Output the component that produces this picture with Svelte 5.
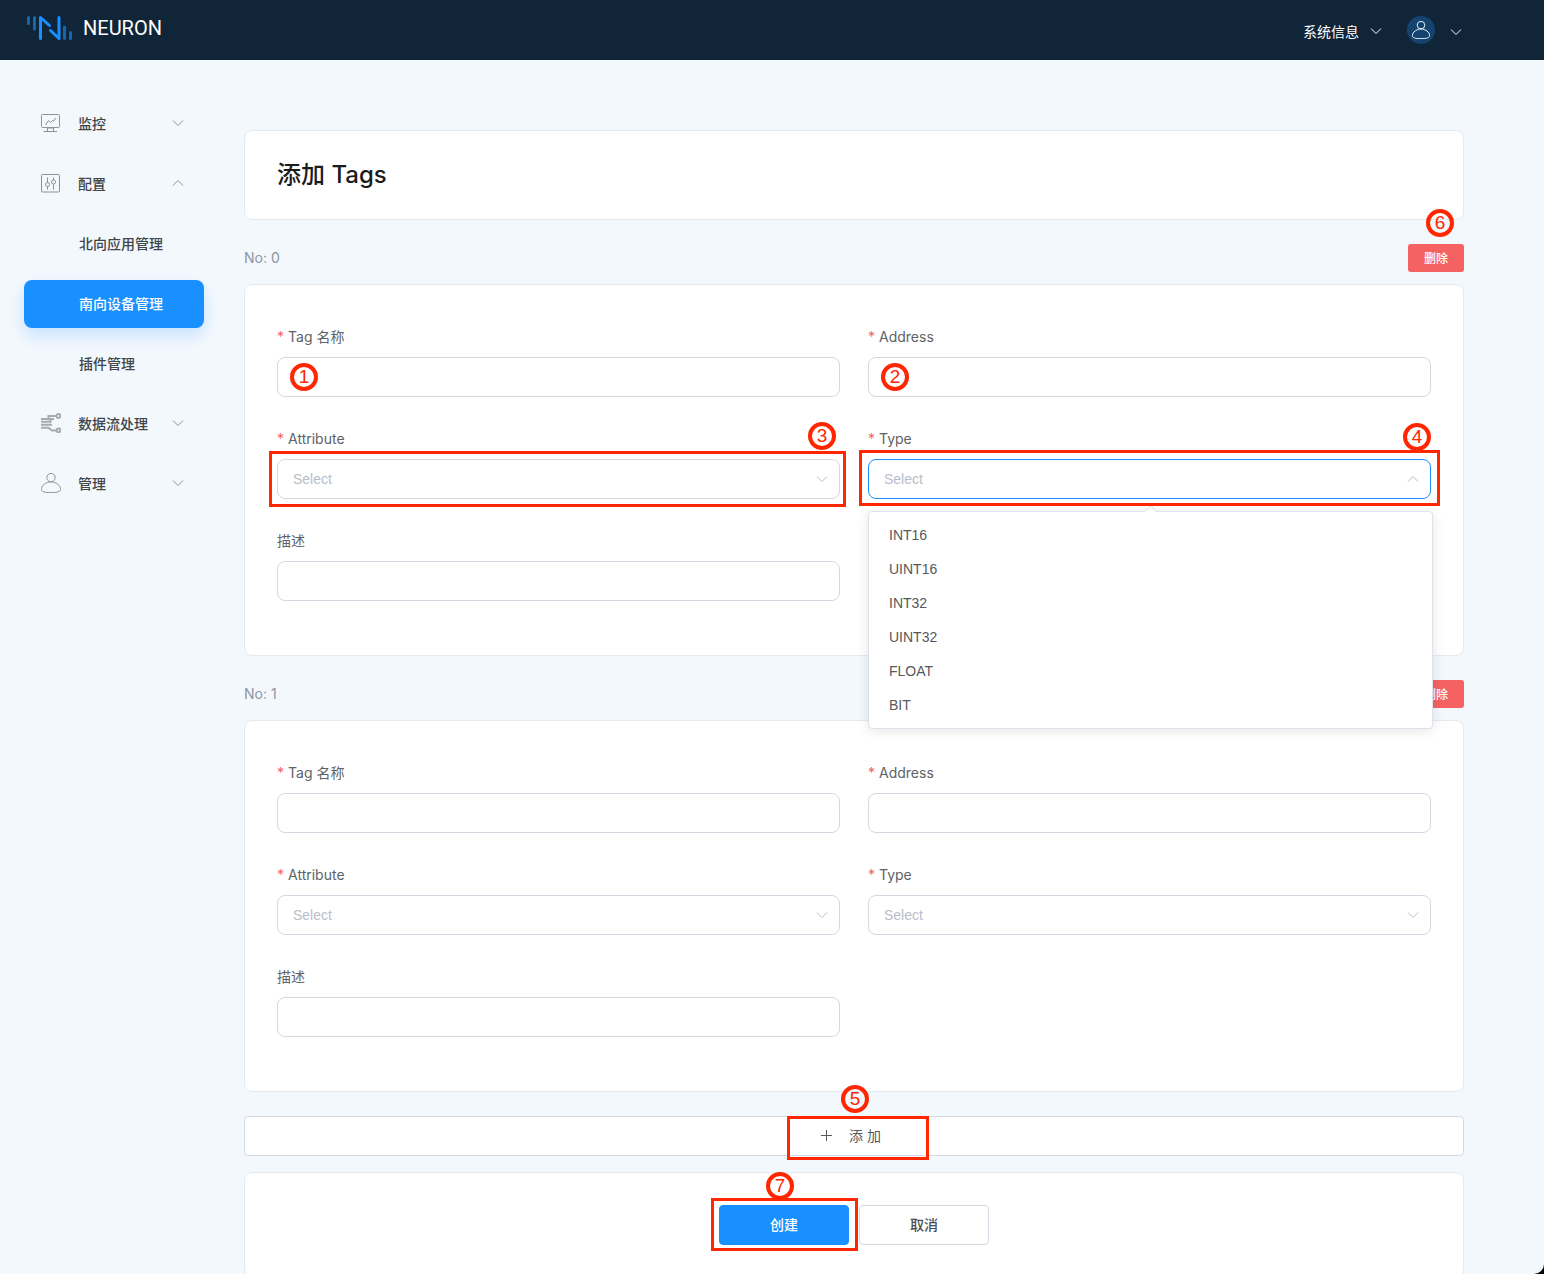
<script>
    const menus = [
        { key: "monitor", label: "监控", open: false },
        {
            key: "config",
            label: "配置",
            open: true,
            children: ["北向应用管理", "南向设备管理", "插件管理"],
        },
        { key: "stream", label: "数据流处理", open: false },
        { key: "admin", label: "管理", open: false },
    ];
    const activeMenu = "南向设备管理";

    const attributes = ["Read", "Write", "Subscribe"];
    const types = ["INT16", "UINT16", "INT32", "UINT32", "FLOAT", "BIT"];

    const emptyTag = () => ({
        name: "",
        address: "",
        attribute: "",
        type: "",
        description: "",
    });

    let tags = $state([emptyTag(), emptyTag()]);
    // 当前展开类型下拉框的行
    let openRow = $state(0);

    function addTag() {
        tags.push(emptyTag());
    }

    function removeTag(index) {
        tags.splice(index, 1);
    }

    function pickType(tag, type) {
        tag.type = type;
        openRow = -1;
    }
</script>

{#snippet chevron(up = false)}
    <svg class="chevron" viewBox="0 0 12 12" aria-hidden="true">
        <path d={up ? "M1 8.5 6 3.5 11 8.5" : "M1 3.5 6 8.5 11 3.5"} />
    </svg>
{/snippet}

{#snippet person()}
    <svg class="icon" viewBox="0 0 20 20" aria-hidden="true">
        <circle cx="10" cy="4.6" r="4.2" />
        <path
            d="M6.8 9.4C3.2 10.4.3 13.4.3 16.4c0 2.2 3.4 3.2 9.7 3.2s9.7-1 9.7-3.2c0-3-2.9-6-6.5-7-1.8-.7-4.6-.7-6.4 0Z"
        />
    </svg>
{/snippet}

{#snippet menuIcon(key)}
    {#if key === "monitor"}
        <svg class="icon" viewBox="0 0 20 20" aria-hidden="true">
            <rect x="0.5" y="1.5" width="18" height="13" rx="1" />
            <path
                d="M4.5 12 7.5 7.5 9.5 9.5 11.5 7.5 12.500 8 15 5M6.500 14.500v4M12.500 14.500v4M6.500 15h6M2.500 18.500h13.500"
            />
        </svg>
    {:else if key === "config"}
        <svg class="icon" viewBox="0 0 20 20" aria-hidden="true">
            <rect x="0.5" y="1.5" width="18" height="17.500" rx="1" />
            <path d="M6.500 4.500v5M6.500 13.500v3M12.500 4.500v2.500M12.500 11v5.500" />
            <circle cx="6.5" cy="11.5" r="2" />
            <circle cx="12.5" cy="9" r="2" />
        </svg>
    {:else if key === "stream"}
        <svg class="icon thick" viewBox="0 0 20 20" aria-hidden="true">
            <path
                d="M0 6h7.500V3H15M0 8.700h9.500V6H13M0 11.800h11M0 14.800h7.500L11 17.500h4"
            />
            <circle cx="17.5" cy="3" r="1.9" />
            <circle cx="17.5" cy="17.3" r="1.9" />
        </svg>
    {:else}
        {@render person()}
    {/if}
{/snippet}

{#snippet badge(text, place)}
    <span class="badge {place}">{text}</span>
{/snippet}

<div class="app">
    <header class="topbar">
        <a class="brand" href="#home">
            <svg class="logo" viewBox="0 0 46 26" aria-hidden="true">
                <path class="dim" d="M1.5 2.5v6M7.5 2.500v11.500M37.500 12v11.500M43.500 17.500v6" />
                <path d="M13.5 23.5V2.500L22.500 10.500M23.500 15.500 32 23.500V2.500" />
            </svg>
            <span>NEURON</span>
        </a>
        <div class="topbar-right">
            <button class="topbar-btn system">系统信息 {@render chevron()}</button>
            <button class="topbar-btn user" aria-label="用户">
                <span class="avatar">{@render person()}</span>
                {@render chevron()}
            </button>
        </div>
    </header>

    <div class="body">
        <nav class="sidebar">
            {#each menus as menu (menu.key)}
                <button class="menu-item" aria-expanded={menu.open}>
                    {@render menuIcon(menu.key)}
                    <span class="menu-label">{menu.label}</span>
                    {@render chevron(menu.open)}
                </button>
                {#if menu.open}
                    {#each menu.children as child}
                        <a
                            class="menu-item sub"
                            class:active={child === activeMenu}
                            href="#{child}">{child}</a
                        >
                    {/each}
                {/if}
            {/each}
        </nav>

        <main class="content">
            <section class="card heading">
                <h1>添加 Tags</h1>
            </section>

            {#each tags as tag, i}
                <div class="tag-bar">
                    <span class="tag-no">No: {i}</span>
                    <div class="anchor">
                        <button class="btn-delete" onclick={() => removeTag(i)}>删除</button>
                        {#if i === 0}{@render badge(6, "on-delete")}{/if}
                    </div>
                </div>
                <section class="card form">
                    <div class="field">
                        <label class="required" for="name-{i}">Tag 名称</label>
                        <div class="anchor">
                            <input id="name-{i}" type="text" bind:value={tag.name} />
                            {#if i === 0}{@render badge(1, "in-input")}{/if}
                        </div>
                    </div>
                    <div class="field">
                        <label class="required" for="address-{i}">Address</label>
                        <div class="anchor">
                            <input id="address-{i}" type="text" bind:value={tag.address} />
                            {#if i === 0}{@render badge(2, "in-input")}{/if}
                        </div>
                    </div>
                    <div class="field">
                        <label class="required" for="attribute-{i}">Attribute</label>
                        <div class="anchor">
                            <select
                                id="attribute-{i}"
                                class:empty={!tag.attribute}
                                bind:value={tag.attribute}
                            >
                                <option value="">Select</option>
                                {#each attributes as item}
                                    <option value={item}>{item}</option>
                                {/each}
                            </select>
                            {@render chevron()}
                            {#if i === 0}
                                <span class="frame around-attribute"></span>
                                {@render badge(3, "on-attribute")}
                            {/if}
                        </div>
                    </div>
                    <div class="field">
                        <label class="required" for="type-{i}">Type</label>
                        <div class="anchor">
                            <select
                                id="type-{i}"
                                class:empty={!tag.type}
                                class:focused={openRow === i}
                                bind:value={tag.type}
                            >
                                <option value="">Select</option>
                                {#each types as item}
                                    <option value={item}>{item}</option>
                                {/each}
                            </select>
                            {@render chevron(openRow === i)}
                            {#if openRow === i}
                                <ul class="dropdown">
                                    {#each types as item}
                                        <li>
                                            <button onclick={() => pickType(tag, item)}>{item}</button>
                                        </li>
                                    {/each}
                                </ul>
                            {/if}
                            {#if i === 0}
                                <span class="frame around-type"></span>
                                {@render badge(4, "on-type")}
                            {/if}
                        </div>
                    </div>
                    <div class="field">
                        <label for="description-{i}">描述</label>
                        <input id="description-{i}" type="text" bind:value={tag.description} />
                    </div>
                </section>
            {/each}

            <button class="btn-add" onclick={addTag}>
                <svg class="plus" viewBox="0 0 14 14" aria-hidden="true">
                    <path d="M7.5 2v11M2 7.5h11" />
                </svg>
                <span>添 加</span>
                <span class="frame around-add"></span>
                {@render badge(5, "on-add")}
            </button>

            <section class="card actions">
                <div class="anchor">
                    <button class="btn primary">创建</button>
                    <span class="frame around-create"></span>
                    {@render badge(7, "on-create")}
                </div>
                <button class="btn">取消</button>
            </section>
        </main>
    </div>
</div>

<style>
    :global(body) {
        background: #000;
    }

    .app {
        --primary: #1890ff;
        --border: #d6d8e3;
        --mark: #ff2600;
        height: 100vh;
        overflow-y: auto;
        scrollbar-width: none;
        background: #f3f8fd;
        border-bottom-right-radius: 10px;
        font-family: Inter, "Noto Sans CJK SC", sans-serif;
        font-size: 14px;
        color: #606266;
    }

    .app * {
        box-sizing: border-box;
    }

    button,
    input,
    select {
        font-family: inherit;
        font-size: 14px;
        margin: 0;
    }

    button {
        padding: 0 0 2px;
        cursor: pointer;
    }

    a {
        text-decoration: none;
    }

    svg {
        fill: none;
        stroke: currentColor;
        flex-shrink: 0;
    }

    .chevron {
        width: 12px;
        height: 12px;
    }

    .icon {
        width: 20px;
        height: 20px;
    }

    /* 顶部栏 */
    .topbar {
        display: flex;
        align-items: center;
        justify-content: space-between;
        height: 60px;
        padding: 0 82px 0 27px;
        background: #102538;
        color: #fff;
    }

    .brand {
        display: flex;
        align-items: center;
        gap: 10px;
        padding-bottom: 5px;
        color: #fff;
        font-family: Roboto, sans-serif;
        font-size: 20px;
    }

    .logo {
        width: 46px;
        height: 26px;
        stroke: var(--primary);
        stroke-width: 3;
        stroke-linecap: round;
        stroke-linejoin: round;
    }

    .logo .dim {
        stroke: #1767ae;
    }

    .topbar-right {
        display: flex;
        align-items: center;
        gap: 25px;
    }

    .topbar-btn {
        display: flex;
        align-items: center;
        padding: 0;
        border: none;
        background: none;
        color: #fff;
    }

    .system {
        gap: 11px;
        padding-top: 2px;
    }

    .user {
        gap: 15px;
    }

    .user > .chevron {
        margin-top: 3px;
    }

    .avatar {
        display: flex;
        align-items: center;
        justify-content: center;
        width: 28px;
        height: 28px;
        border-radius: 50%;
        background: #15436f;
    }

    .avatar .icon {
        width: 18px;
        height: 18px;
    }

    .body {
        display: flex;
    }

    /* 侧边菜单 */
    .sidebar {
        display: flex;
        flex-direction: column;
        gap: 12px;
        flex: 0 0 244px;
        padding: 40px 40px 0 24px;
    }

    .menu-item {
        display: flex;
        align-items: center;
        gap: 17px;
        height: 48px;
        padding: 0 20px 2px 17px;
        border: none;
        border-radius: 8px;
        background: none;
        color: #40454a;
        font-weight: 500;
        text-align: left;
    }

    .menu-item .icon,
    .menu-item .chevron {
        color: #8d9297;
    }

    .menu-item .icon.thick {
        color: #a6abb0;
        stroke-width: 2;
    }

    .menu-label {
        flex: 1;
    }

    .menu-item.sub {
        padding-left: 55px;
    }

    .menu-item.active {
        background: var(--primary);
        color: #fff;
        box-shadow: 0 8px 16px rgba(24, 144, 255, 0.2);
    }

    /* 主内容 */
    .content {
        flex: 1;
        min-width: 0;
        padding: 70px 80px 0 0;
    }

    .card {
        padding: 32px;
        border: 1px solid #e4e9f2;
        border-radius: 8px;
        background: #fff;
    }

    .heading {
        padding: 28px 32px;
        margin-bottom: 24px;
    }

    h1 {
        margin: 0;
        color: #1b1b1d;
        font-size: 24px;
        font-weight: 500;
        line-height: 32px;
    }

    .tag-bar {
        display: flex;
        align-items: center;
        justify-content: space-between;
        margin-bottom: 12px;
        color: #8b96a3;
    }

    .tag-no {
        padding-bottom: 2px;
    }

    .anchor {
        position: relative;
    }

    .btn-delete {
        display: block;
        width: 56px;
        height: 28px;
        border: none;
        border-radius: 3px;
        background: #f56262;
        color: #fff;
        font-size: 12px;
        font-weight: 500;
    }

    .form {
        display: grid;
        grid-template-columns: 1fr 1fr;
        column-gap: 28px;
        margin-bottom: 24px;
    }

    .field {
        margin-bottom: 22px;
    }

    .field label {
        display: block;
        line-height: 40px;
    }

    .required::before {
        content: "*";
        margin-right: 4px;
        color: #f56262;
    }

    input,
    select {
        display: block;
        width: 100%;
        height: 40px;
        padding: 0 15px;
        border: 1px solid var(--border);
        border-radius: 8px;
        outline: none;
        background: #fff;
        color: #606266;
        font-family: "Liberation Sans", "Noto Sans CJK SC", sans-serif;
    }

    select {
        appearance: none;
    }

    select.empty {
        color: #b9bdca;
    }

    input:focus,
    select:focus,
    select.focused {
        border-color: var(--primary);
    }

    .anchor > .chevron {
        position: absolute;
        top: 14px;
        right: 12px;
        color: #b9bdca;
        pointer-events: none;
    }

    .dropdown {
        position: absolute;
        top: 52px;
        left: 0;
        right: -2px;
        z-index: 2;
        margin: 0;
        padding: 6px 0;
        border: 1px solid #dfe2ec;
        border-radius: 4px;
        background: #fff;
        box-shadow: 0 2px 12px rgba(0, 0, 0, 0.1);
        list-style: none;
    }

    .dropdown::before {
        content: "";
        position: absolute;
        top: -5px;
        left: 50%;
        width: 8px;
        height: 8px;
        margin-left: -5px;
        border: 1px solid #dfe2ec;
        border-right: none;
        border-bottom: none;
        background: #fff;
        transform: rotate(45deg);
    }

    .dropdown button {
        display: block;
        width: 100%;
        height: 34px;
        padding: 0 20px;
        border: none;
        background: none;
        color: #56585c;
        font-family: "Liberation Sans", "Noto Sans CJK SC", sans-serif;
        text-align: left;
    }

    .dropdown button:hover {
        background: #f5f7fa;
    }

    .btn-add {
        position: relative;
        display: flex;
        align-items: center;
        justify-content: center;
        gap: 16px;
        width: 100%;
        height: 40px;
        margin-bottom: 16px;
        padding-right: 8px;
        border: 1px solid var(--border);
        border-radius: 4px;
        background: #fff;
        color: #56585c;
    }

    .plus {
        width: 14px;
        height: 14px;
    }

    .actions {
        display: flex;
        justify-content: center;
        gap: 10px;
    }

    .btn {
        width: 130px;
        height: 40px;
        border: 1px solid var(--border);
        border-radius: 4px;
        background: #fff;
        color: #4a4d52;
        font-weight: 500;
    }

    .btn.primary {
        border-color: var(--primary);
        background: var(--primary);
        color: #fff;
    }

    /* 步骤标注 */
    .badge {
        position: absolute;
        z-index: 3;
        display: flex;
        align-items: center;
        justify-content: center;
        width: 28px;
        height: 28px;
        border: 4px solid var(--mark);
        border-radius: 50%;
        color: var(--mark);
        font-family: "Liberation Sans", sans-serif;
        font-size: 19px;
        line-height: 20px;
        pointer-events: none;
    }

    .in-input {
        top: 6px;
        left: 13px;
    }

    .on-attribute {
        top: -37px;
        right: 4px;
    }

    .on-type {
        top: -36px;
        right: 0;
    }

    .on-delete {
        top: -35px;
        right: 10px;
    }

    .on-add {
        top: -32px;
        left: calc(50% - 13px);
    }

    .on-create {
        top: -33px;
        left: 47px;
    }

    .frame {
        position: absolute;
        z-index: 3;
        border: 3px solid var(--mark);
        pointer-events: none;
    }

    .around-attribute {
        inset: -8px -6px -8px -8px;
    }

    .around-type {
        inset: -9px -9px -7px -9px;
    }

    .around-add {
        inset: -1px calc(50% - 75px) -5px calc(50% - 67px);
    }

    .around-create {
        inset: -7px -9px -6px -8px;
    }
</style>
